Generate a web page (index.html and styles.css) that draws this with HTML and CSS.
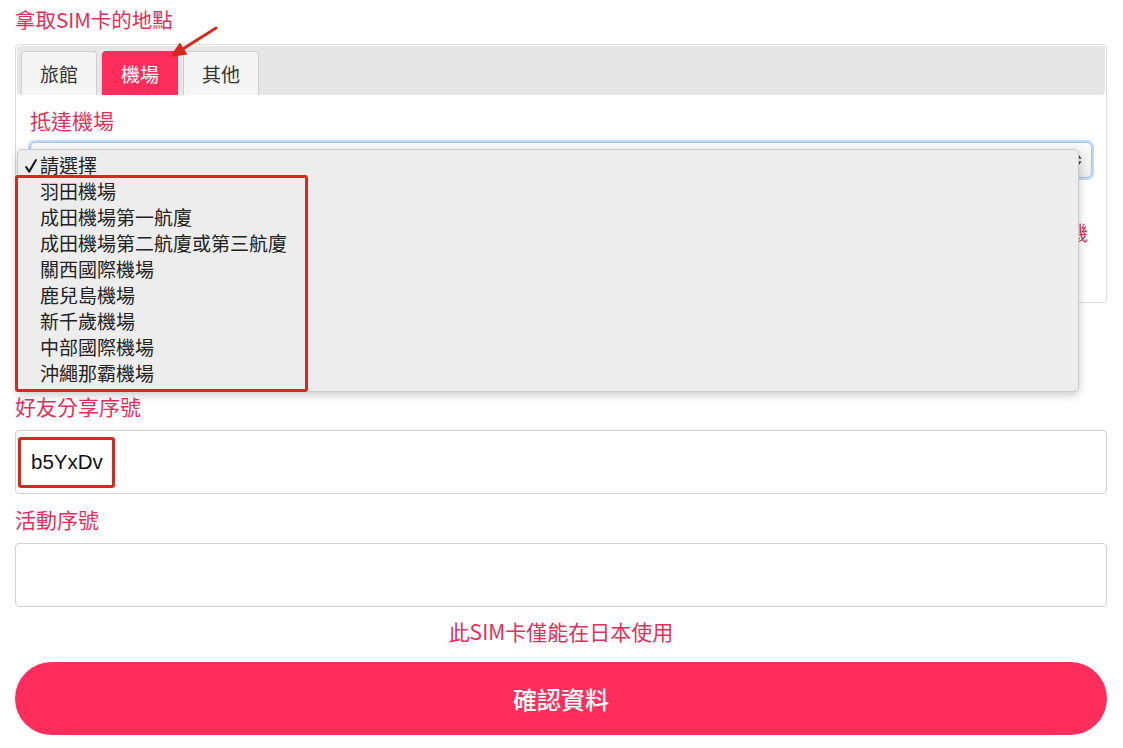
FILE: index.html
```html
<!DOCTYPE html>
<html lang="zh-Hant">
<head>
<meta charset="utf-8">
<title>拿取SIM卡的地點</title>
<link rel="stylesheet" href="styles.css">
</head>
<body>
<main class="page">
  <h2 class="title">拿取SIM卡的地點</h2>
  <section class="panel">
    <div class="tabbar">
      <div class="tab">旅館</div>
      <div class="tab tab-active">機場</div>
      <div class="tab">其他</div>
    </div>
    <div class="panel-body">
      <div class="label">抵達機場</div>
      <div class="select">
        <span class="select-value">請選擇</span>
        <svg class="select-arrows" width="8" height="14" viewBox="0 0 8 14"><path d="M4 1 L7.5 5.5 H0.5 Z M4 13 L7.5 8.5 H0.5 Z" fill="#222"/></svg>
      </div>
      <div class="panel-note">請於抵達後至指定櫃檯領取SIM卡，並確認抵達的航班與機</div>
    </div>
  </section>

  <div class="label label-gap">好友分享序號</div>
  <div class="input"><span class="input-text">b5YxDv</span></div>

  <div class="label label-next">活動序號</div>
  <div class="input"></div>

  <div class="notice">此SIM卡僅能在日本使用</div>
  <button class="submit">確認資料</button>
</main>

<div class="dropdown">
  <div class="option option-checked"><svg class="check" width="12" height="14" viewBox="0 0 12 14"><path d="M1.2 8.2 L4.2 12.6 L10.8 1.2" fill="none" stroke="#1a1a1a" stroke-width="2.1" stroke-linecap="round" stroke-linejoin="round"/></svg>請選擇</div>
  <div class="option">羽田機場</div>
  <div class="option">成田機場第一航廈</div>
  <div class="option">成田機場第二航廈或第三航廈</div>
  <div class="option">關西國際機場</div>
  <div class="option">鹿兒島機場</div>
  <div class="option">新千歲機場</div>
  <div class="option">中部國際機場</div>
  <div class="option">沖繩那霸機場</div>
</div>

<div class="mark mark-list"></div>
<div class="mark mark-code"></div>

<svg class="arrow" width="240" height="90" viewBox="0 0 240 90">
  <line x1="216" y1="28" x2="183.6" y2="48.4" stroke="#d8281c" stroke-width="3" stroke-linecap="round"/>
  <polygon points="170,57 187.4,54.4 179.8,42.4" fill="#d8281c"/>
</svg>
</body>
</html>
```

FILE: styles.css
```css
html, body {
  margin: 0;
  padding: 0;
  background: #ffffff;
}

body {
  position: relative;
  font-family: "Noto Sans CJK TC", "Noto Sans", sans-serif;
  color: #222;
}

.page {
  padding: 0 16px 0 15px;
}

.title {
  margin: 0;
  padding-top: 6px;
  font-size: 20.5px;
  line-height: 27px;
  font-weight: 400;
  color: #e0305b;
}

.panel {
  margin-top: 11px;
  border: 1px solid #dcdcdc;
  border-radius: 4px;
  padding: 1px;
}

.tabbar {
  display: flex;
  gap: 5px;
  height: 49px;
  padding: 5px 4px 0;
  box-sizing: border-box;
  background: #e6e6e6;
  border-radius: 4px;
}

.tab {
  width: 76px;
  height: 44px;
  box-sizing: border-box;
  display: flex;
  align-items: center;
  justify-content: center;
  background: #f5f5f5;
  border: 1px solid #cfcfcf;
  border-bottom: none;
  border-radius: 4px 4px 0 0;
  font-size: 19px;
  color: #333;
}

.tab-active {
  background: #ff2d5b;
  border-color: #ff2d5b;
  color: #fff;
}

.panel-body {
  padding: 12px 13px 56px;
}

.label {
  font-size: 21px;
  line-height: 27px;
  color: #e0305b;
}

.select {
  margin-top: 8px;
  height: 36px;
  box-sizing: border-box;
  display: flex;
  align-items: center;
  justify-content: space-between;
  padding: 0 9px 0 10px;
  border: 1px solid #9fc3ea;
  border-radius: 5px;
  box-shadow: 0 0 0 2px rgba(140, 185, 235, 0.55);
  background: linear-gradient(#fbfbfb, #ececec);
  font-size: 17px;
}

.select-arrows {
  display: block;
}

.panel-note {
  margin-top: 43px;
  font-size: 20px;
  line-height: 24px;
  color: #e0305b;
  text-align: right;
  padding-right: 4px;
}

.label-gap {
  margin-top: 90px;
}

.input {
  margin-top: 10px;
  height: 64px;
  box-sizing: border-box;
  border: 1px solid #d2d2d2;
  border-radius: 4px;
  display: flex;
  align-items: center;
  padding-left: 15px;
}

.input-text {
  font-family: "Liberation Sans", Arial, sans-serif;
  font-size: 20.5px;
  color: #111;
}

.label-next {
  margin-top: 12px;
}

.notice {
  margin-top: 11px;
  text-align: center;
  font-size: 21px;
  line-height: 27px;
  color: #e0305b;
}

.submit {
  display: block;
  width: 100%;
  margin-top: 17px;
  height: 73px;
  border: none;
  border-radius: 37px;
  background: #ff2d5b;
  color: #fff;
  font-family: "Noto Sans CJK TC", "Noto Sans", sans-serif;
  font-size: 24px;
  font-weight: 500;
}

.dropdown {
  position: absolute;
  left: 17px;
  top: 149px;
  width: 1062px;
  height: 243px;
  box-sizing: border-box;
  padding: 2px 0 0;
  background: #ededed;
  border: 1px solid #cacaca;
  border-radius: 5px;
  box-shadow: 0 3px 10px rgba(0, 0, 0, 0.22);
}

.option {
  height: 26px;
  line-height: 26px;
  padding-left: 22px;
  font-size: 19px;
  color: #222;
  position: relative;
}

.check {
  position: absolute;
  left: 7px;
  top: 7px;
  display: block;
}

.mark {
  position: absolute;
  border: 3px solid #d62a1e;
  border-radius: 3px;
  box-sizing: border-box;
}

.mark-list {
  left: 15px;
  top: 175px;
  width: 293px;
  height: 217px;
}

.mark-code {
  left: 18px;
  top: 437px;
  width: 97px;
  height: 51px;
}

.arrow {
  position: absolute;
  left: 0;
  top: 0;
  pointer-events: none;
}
```
